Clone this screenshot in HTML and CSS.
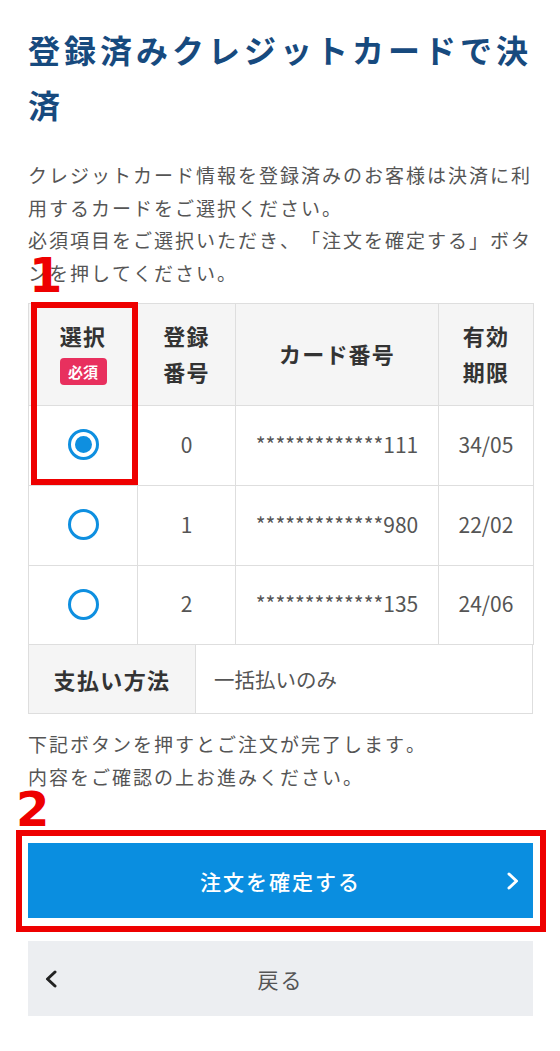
FILE: index.html
```html
<!DOCTYPE html>
<html lang="ja">
<head>
<meta charset="utf-8">
<title>登録済みクレジットカードで決済</title>
<link rel="stylesheet" href="styles.css">
</head>
<body>
<main class="page">
  <h1 class="title">登録済みクレジットカードで決済</h1>
  <p class="lead">クレジットカード情報を登録済みのお客様は決済に利用するカードをご選択ください。<br>必須項目をご選択いただき、「注文を確定する」ボタンを押してください。</p>

  <table class="cards">
    <thead>
      <tr>
        <th class="c-sel"><span class="sel-label">選択</span><span class="badge">必須</span></th>
        <th class="c-no">登録<br>番号</th>
        <th class="c-num">カード番号</th>
        <th class="c-exp">有効<br>期限</th>
      </tr>
    </thead>
    <tbody>
      <tr>
        <td class="c-sel"><span class="radio checked"></span></td>
        <td class="c-no">0</td>
        <td class="c-num">*************111</td>
        <td class="c-exp">34/05</td>
      </tr>
      <tr>
        <td class="c-sel"><span class="radio"></span></td>
        <td class="c-no">1</td>
        <td class="c-num">*************980</td>
        <td class="c-exp">22/02</td>
      </tr>
      <tr class="last">
        <td class="c-sel"><span class="radio"></span></td>
        <td class="c-no">2</td>
        <td class="c-num">*************135</td>
        <td class="c-exp">24/06</td>
      </tr>
    </tbody>
  </table>
  <div class="pay">
    <div class="pay-label">支払い方法</div>
    <div class="pay-value">一括払いのみ</div>
  </div>

  <p class="note">下記ボタンを押すとご注文が完了します。<br>内容をご確認の上お進みください。</p>

  <div class="actions">
    <button class="btn btn-primary" type="button">
      <span class="btn-text">注文を確定する</span>
      <svg class="chev chev-right" viewBox="0 0 12 18" width="12" height="18"><path d="M2 2 L9.5 9 L2 16" fill="none" stroke="#fff" stroke-width="3" stroke-linecap="round" stroke-linejoin="round"/></svg>
    </button>
    <button class="btn btn-back" type="button">
      <svg class="chev chev-left" viewBox="0 0 12 18" width="12" height="18"><path d="M10 2 L2.5 9 L10 16" fill="none" stroke="#222" stroke-width="3" stroke-linecap="round" stroke-linejoin="round"/></svg>
      <span class="btn-text">戻る</span>
    </button>
  </div>

  <span class="mark mark-1">1</span>
  <span class="frame frame-1"></span>
  <span class="mark mark-2">2</span>
  <span class="frame frame-2"></span>
</main>
</body>
</html>
```

FILE: styles.css
```css
* { box-sizing: border-box; }
html, body { margin: 0; padding: 0; background: #fff; }
body {
  font-family: "Noto Sans CJK JP", "Noto Sans", sans-serif;
  color: #555;
  text-spacing-trim: space-all;
  font-kerning: none;
  font-feature-settings: "kern" 0, "chws" 0, "halt" 0, "palt" 0;
}
.page {
  position: relative;
  width: 560px;
  padding: 22px 27px 0 28px;
}
.title {
  margin: 0;
  font-size: 32px;
  line-height: 55px;
  letter-spacing: 4px;
  font-weight: 700;
  color: #174a7e;
}
.lead, .note {
  margin: 0;
  font-size: 19px;
  line-height: 32.5px;
  letter-spacing: 2px;
  color: #555;
}
.lead { margin-top: 27px; }

.cards {
  margin-top: 14px;
  width: 505px;
  border-collapse: collapse;
  table-layout: fixed;
  font-size: 21px;
}
.cards th, .cards td {
  border: 1px solid #dedede;
  text-align: center;
  padding: 0;
}
.cards th {
  background: #f5f5f5;
  color: #333;
  font-weight: 700;
  font-size: 22px;
  letter-spacing: 1.2px;
  height: 102px;
  line-height: 36px;
  padding-bottom: 4px;
}
.cards td {
  height: 80px;
  color: #555;
  padding-bottom: 4px;
}
.cards tr.last td { height: 79px; }
.c-sel { width: 109px; }
.c-no { width: 98px; }
.c-num { width: 203px; }
.c-exp { width: 95px; }

.sel-label { display: block; }
.cards th.c-sel { padding-bottom: 8px; }
.badge {
  display: block;
  width: 47px;
  height: 27px;
  margin: 5px auto 0;
  border-radius: 4px;
  background: #e8305e;
  color: #fff;
  font-size: 15px;
  letter-spacing: 0;
  line-height: 27px;
  font-weight: 700;
}
.radio {
  display: inline-block;
  width: 31px;
  height: 31px;
  border: 3px solid #0e8fe0;
  border-radius: 50%;
  vertical-align: middle;
  position: relative;
}
.radio.checked::after {
  content: "";
  position: absolute;
  left: 4px;
  top: 4px;
  width: 17px;
  height: 17px;
  border-radius: 50%;
  background: #0e8fe0;
}

.pay {
  display: flex;
  width: 505px;
  height: 69px;
  border: 1px solid #dedede;
  border-top: none;
}
.pay-label {
  width: 167px;
  background: #f5f5f5;
  border-right: 1px solid #dedede;
  color: #333;
  font-weight: 700;
  font-size: 22px;
  letter-spacing: 1.4px;
  display: flex;
  align-items: center;
  justify-content: center;
}
.pay-value {
  flex: 1;
  display: flex;
  align-items: center;
  padding-left: 18px;
  font-size: 20.5px;
  color: #555;
}

.note { margin-top: 14px; }

.actions {
  margin-top: 50px;
  display: flex;
  flex-direction: column;
  gap: 23px;
  width: 505px;
}
.btn {
  position: relative;
  display: flex;
  align-items: center;
  justify-content: center;
  height: 75px;
  width: 100%;
  border: none;
  margin: 0;
  font-family: inherit;
}
.btn-primary {
  background: #0a8ee0;
  color: #fff;
  font-size: 21px;
  letter-spacing: 2px;
  font-weight: 500;
}
.btn-back {
  background: #eceef1;
  color: #555;
  font-size: 21px;
  letter-spacing: 2px;
}
.chev { position: absolute; top: 50%; margin-top: -9px; }
.chev-right { right: 14px; }
.chev-left { left: 17px; }

.mark {
  position: absolute;
  color: #ee0000;
  font-family: "DejaVu Sans", sans-serif;
  font-weight: 700;
  font-size: 48px;
  line-height: 1;
}
.mark-1 { left: 29px; top: 251px; }
.mark-2 { left: 16px; top: 785px; }
.frame {
  position: absolute;
  border: 6px solid #ee0000;
}
.frame-1 { left: 31px; top: 302px; width: 107px; height: 183px; }
.frame-2 { left: 16px; top: 830px; width: 530px; height: 102px; }
```
